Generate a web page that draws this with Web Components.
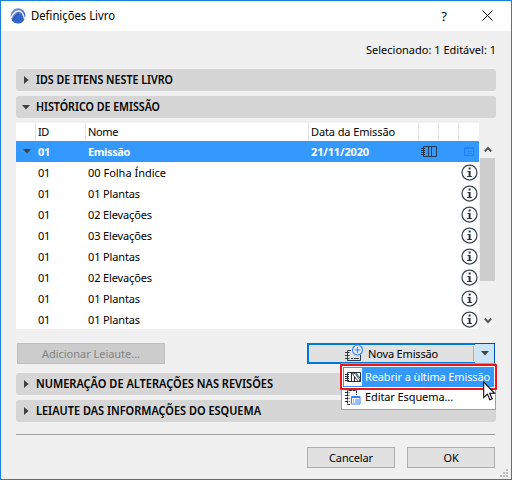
<!DOCTYPE html>
<html lang="pt">
<head>
<meta charset="utf-8">
<title>Definições Livro</title>
<style>
body{margin:0;width:512px;height:480px;overflow:hidden;background:#f0f0f0;color:#000;font:11px/14px "Noto Sans","Open Sans",sans-serif}
</style>
</head>
<body>
<book-dialog></book-dialog>
<script>
function define(name, html, setup) {
  customElements.define(name, class extends HTMLElement {
    connectedCallback() {
      if (this.shadowRoot) return;
      const t = document.createElement('template');
      t.innerHTML = html;
      this.attachShadow({mode: 'open'}).append(t.content.cloneNode(true));
      if (setup) setup(this, this.shadowRoot);
    }
  });
}

// A label that occupies the width in its "w" attribute, by tracking or, with "squeeze", by scaling.
define('fit-text', `<style>:host{display:inline-block;white-space:nowrap;flex:none}span{display:inline-block;white-space:pre;transform-origin:0 50%}</style><span><slot></slot></span>`, (el, root) => {
  const s = root.querySelector('span'), w = +el.getAttribute('w');
  const n = el.textContent.length, natural = s.getBoundingClientRect().width;
  if (el.hasAttribute('squeeze')) s.style.transform = `scaleX(${w / natural})`;
  else s.style.letterSpacing = ((w - natural) / n) + 'px';
  el.style.width = w + 'px';
});

const glyphs = {
  logo: ['0 0 16 16', `<defs><linearGradient id="g" x1="0" y1="0" x2="1" y2="1"><stop offset="0" stop-color="#7fa2e6"/><stop offset="1" stop-color="#1d47ac"/></linearGradient></defs><circle cx="8" cy="7.7" r="7.4" fill="url(#g)"/><path d="M.9 10.2C3.2 4.7 7.2 1.8 10.4 3.3c2.4 1.2 3.6 4.8 4.1 8" fill="none" stroke="#e8effc" stroke-width="1.5"/><path d="M2.5 13.3C4.4 8.6 7 5.4 9.2 6c2.4.7 3.2 3.8 3.3 8-3.1 2.2-7.500 2.100-10-.7z" fill="#3265cc"/><path d="M2.200 12.900C4 9 6.500 5.400 9 5.700" fill="none" stroke="#203e86" stroke-width=".8"/>`],
  right: ['0 0 5 8', `<path d="M0 0l4.600 4L0 8z" fill="#404040"/>`],
  down: ['0 0 8 5', `<path d="M0 0h8L4 4.500z" fill="#404040"/>`],
  info: ['0 0 17 17', `<circle cx="8.500" cy="8.500" r="7.500" fill="none" stroke="#3b474f" stroke-width="1.250"/><path d="M7.600 3.600h2v2h-2zM6.500 6.900h3.100v5.200h1.300v1H6.200v-1h1.400V7.900H6.500z" fill="#27343d"/>`],
  book: ['0 0 16 12', `<path d="M2.500.5h13v10h-13zM7.500.5v10M10.500.5v10M0 2.500h4M0 4.500h4M0 6.500h4M0 8.500h4" fill="none" stroke="#293d51"/>`],
  form: ['0 0 11 9', `<path d="M.5.5h9v8h-9zM.5 1.500h9M2 4.500h1M4 4.500h4M2 6.500h1M4 6.500h4" fill="none" stroke="#2380ff"/>`],
  add: ['0 0 19 18', `<path d="M6 6.500H2.500v10h13v-6M0 8.500h4.500M0 11.500h4.500M0 14.500h4.500M6 14.500h2M9 14.500h5" fill="none" stroke="#303b44"/><circle cx="12.500" cy="6" r="5" fill="#ececec" stroke="#3d8cff" stroke-width="1.200"/><path d="M12.500 3v6M9.500 6h6" stroke="#3d8cff" stroke-width="1.200"/>`],
  reopen: ['0 0 18 18', `<rect width="18" height="18" fill="#fff"/><path d="M3.500 4.500h13v9h-13zM1 6.500h4M1 8.500h4M1 10.500h4M1 12.500h4M7.500 4.500v9M10.500 8v5.500" fill="none" stroke="#222f38"/><path d="M8.500 5l2.500.3 5 6.700-1.500 1.500-5-6zM12 5l4 5M11 9l-1 4.500" fill="#fff" stroke="#222f38" stroke-width=".9"/>`],
  scheme: ['0 0 18 18', `<path d="M6 16.500H3.500v-14h9V7M1 4.500h4.500M1 7.500h4.500M1 10.500h4.500M1 13.500h4.500" fill="none" stroke="#222f38" stroke-dasharray="3 .6"/><path d="M7.500 8.500h8.500v7.500H7.500z" fill="#fff" stroke="#2f80ff"/><path d="M7.500 9.500h8.500M9 12h1M11 12h4M9 14h1M11 14h4" stroke="#2f80ff"/>`],
  close: ['0 0 11 11', `<path d="M.5.500l10 10M10.500.500l-10 10" stroke="#000" stroke-width="1"/>`],
  up: ['0 0 8 7', `<path d="M.8 5.500L4 2l3.200 3.500" fill="none" stroke="#555" stroke-width="1.900"/>`],
  dn: ['0 0 8 7', `<path d="M.8 1.500L4 5l3.200-3.500" fill="none" stroke="#555" stroke-width="1.900"/>`],
  grip: ['0 0 8 8', `<path d="M6 0h2v2H6zM3 3h2v2H3zM6 3h2v2H6zM0 6h2v2H0zM3 6h2v2H3zM6 6h2v2H6z" fill="#bfbfbf"/>`],
  cursor: ['0 0 13 20', `<path d="M.7 1v15.600l3.700-3.500 2.500 5.700 2.300-1-2.500-5.500h4.900z" fill="#fff" stroke="#000" stroke-width="1.050"/>`]
};
define('ui-icon', `<style>:host{display:block;flex:none}svg{display:block}</style><div></div>`, (el, root) => {
  const [box, body] = glyphs[el.getAttribute('name')];
  const [, , w, h] = box.split(' ');
  root.querySelector('div').innerHTML = `<svg viewBox="${box}" width="${w}" height="${h}">${body}</svg>`;
});

define('title-bar', `<style>
:host{display:flex;align-items:center;height:30px;background:#fff;box-sizing:border-box;padding:0 18px 0 9px}
.q{margin:0 35px 1px auto;font-size:13px}.x{margin-bottom:2px}::slotted(*){margin-left:5px;font-size:12px}
</style><ui-icon name="logo"></ui-icon><slot></slot><span class="q">?</span><ui-icon class="x" name="close"></ui-icon>`);

define('panel-header', `<style>
:host{display:flex;align-items:center;height:22px;border-radius:3px;background:#d6d6d6;font-weight:600;font-size:12px}
::slotted(*){margin-bottom:1px}
</style><div class="i"></div><slot></slot>`, (el, root) => {
  const open = el.hasAttribute('open');
  const i = root.querySelector('.i');
  i.innerHTML = `<ui-icon name="${open ? 'down' : 'right'}"></ui-icon>`;
  i.style.padding = open ? '0 6px' : '0 7px 0 8px';
});

define('push-button', `<style>
:host{display:flex;align-items:center;justify-content:center;box-sizing:border-box;height:21px;width:88px;border:1px solid #adadad;background:#e1e1e1}
:host([disabled]){background:#ccc;border-color:#bfbfbf;color:#838383;width:148px}
</style><slot></slot>`);

define('split-button', `<style>
:host{display:flex;box-sizing:border-box;width:188px;height:21px;border:2px solid #0078d7;border-right:0;background:#e1e1e1}
.m{flex:1;display:flex;align-items:center;padding-left:36px}.m ui-icon{margin:-1px 4px 0 0}
.d{box-sizing:border-box;width:20px;height:21px;margin:-2px 0;border:1px solid #005499;border-left:0;background:#cce4f7;display:flex;align-items:center;justify-content:center}
.s{width:1px;background:#adadad;margin:1px 1px 1px 0}
</style><div class="m"><ui-icon name="add"></ui-icon><slot></slot></div><div class="s"></div><div class="d"><ui-icon name="down"></ui-icon></div>`);

define('issue-row', `<style>
:host{display:grid;grid-template-columns:22px 50px 223px 110px 20px 20px 18px;height:21px;align-items:center}
:host([head]){height:18px}
:host([sel]){background:#39f;color:#fff;font-weight:700}
.c{box-sizing:border-box;height:100%;display:flex;align-items:center}
:host([head]) .c+.c{box-shadow:inset 1px 0 #e5e5e5}
.c+.c{margin-left:-3px;padding-left:3px}
.k{justify-content:center}
</style><div class="c k"></div><div class="c t"></div><div class="c t"></div><div class="c t"></div><div class="c a"></div><div class="c"></div><div class="c z"></div>`, (el, root) => {
  const v = (el.getAttribute('data') || '').split('|'), w = el.getAttribute('widths').split(',');
  root.querySelectorAll('.t').forEach((c, i) => {
    if (v[i]) c.innerHTML = `<fit-text w="${w[i]}">${v[i]}</fit-text>`;
  });
  const z = root.querySelector('.z');
  if (el.hasAttribute('sel')) {
    root.querySelector('.k').innerHTML = '<ui-icon name="down"></ui-icon>';
    root.querySelector('.a').innerHTML = '<ui-icon name="book"></ui-icon>';
    z.innerHTML = '<ui-icon name="form" style="margin-left:3px"></ui-icon>';
  } else if (!el.hasAttribute('head')) z.innerHTML = '<ui-icon name="info"></ui-icon>';
});

define('scroll-bar', `<style>
:host{display:flex;flex-direction:column;align-items:center;width:15px;margin-left:1px}
.u{height:17px;display:flex;align-items:center}.b{width:15px;height:123px;background:#cdcdcd}.e{flex:1}
</style><div class="u"><ui-icon name="up"></ui-icon></div><div class="b"></div><div class="e"></div><div class="u"><ui-icon name="dn"></ui-icon></div>`);

const rows = [['00 Folha Índice', 78], ['01 Plantas', 52], ['02 Elevações', 64], ['03 Elevações', 64], ['01 Plantas', 52], ['02 Elevações', 64], ['01 Plantas', 52], ['01 Plantas', 52]];
define('issue-table', `<style>
:host{display:flex;height:206px;overflow:hidden}
.l{width:463px;background:#fff;overflow:hidden}
scroll-bar{margin-top:18px}
</style><div class="l"><issue-row head data="ID|Nome|Data da Emissão" widths="11,30,84"></issue-row><issue-row sel data="01|Emissão|21/11/2020" widths="12,42,58"></issue-row>${rows.map(r => `<issue-row data="01|${r[0]}" widths="12,${r[1]}"></issue-row>`).join('')}</div><scroll-bar></scroll-bar>`);

define('menu-item', `<style>
:host{display:flex;align-items:center;height:20px;padding-left:1px}
:host([active]){background:#39f;color:#fff}
.i{margin-right:3px}
</style><span class="i"></span><slot></slot>`, (el, root) => {
  root.querySelector('.i').innerHTML = `<ui-icon name="${el.getAttribute('icon')}"></ui-icon>`;
});

define('drop-menu', `<style>
:host{display:block;box-sizing:border-box;width:155px;height:47px;border:1px solid #a0a0a0;background:#fff;padding:3px 1px 0 1px}
.r{position:absolute;left:-2px;top:0;width:157px;height:26px;box-sizing:border-box;border:2px solid #f01418;border-radius:1px}
.c{position:absolute;left:141px;top:17px}
</style><slot></slot><div class="r"></div><ui-icon class="c" name="cursor"></ui-icon>`);

define('book-dialog', `<style>
:host{display:flex;flex-direction:column;box-sizing:border-box;width:512px;height:480px;border:1px solid #1883d7;background:#f0f0f0}
.body{display:flex;flex-direction:column;padding:0 15px;width:480px;flex:1}
.status{height:38px;display:flex;justify-content:flex-end;box-sizing:border-box;padding-top:12px}
panel-header+panel-header{margin-top:5px}
issue-table{margin-top:5px}
.actions{display:flex;justify-content:space-between;margin:14px 1px 9px;position:relative}
drop-menu{position:absolute;left:324px;top:20px;z-index:2}
.foot{display:flex;justify-content:flex-end;gap:12px;border-top:1px solid #a0a0a0;margin:12px 1px 0 0;padding-top:12px}
.grip{position:absolute;right:4px;bottom:3px}
</style>
<title-bar><fit-text w="84" squeeze>Definições Livro</fit-text></title-bar>
<div class="body">
<div class="status"><fit-text w="130">Selecionado: 1 Editável: 1</fit-text></div>
<panel-header><fit-text w="137" squeeze>IDS DE ITENS NESTE LIVRO</fit-text></panel-header>
<panel-header open><fit-text w="124" squeeze>HISTÓRICO DE EMISSÃO</fit-text></panel-header>
<issue-table></issue-table>
<div class="actions"><push-button disabled><fit-text w="98">Adicionar Leiaute...</fit-text></push-button>
<split-button><fit-text w="70">Nova Emissão</fit-text></split-button>
<drop-menu><menu-item active icon="reopen"><fit-text w="125">Reabrir a ùltima Emissão</fit-text></menu-item><menu-item icon="scheme"><fit-text w="88">Editar Esquema...</fit-text></menu-item></drop-menu></div>
<panel-header><fit-text w="237" squeeze>NUMERAÇÃO DE ALTERAÇÕES NAS REVISÕES</fit-text></panel-header>
<panel-header><fit-text w="225" squeeze>LEIAUTE DAS INFORMAÇÕES DO ESQUEMA</fit-text></panel-header>
<div class="foot"><push-button><fit-text w="44">Cancelar</fit-text></push-button><push-button><fit-text w="15">OK</fit-text></push-button></div>
</div>
<ui-icon class="grip" name="grip"></ui-icon>`);
</script>
</body>
</html>
